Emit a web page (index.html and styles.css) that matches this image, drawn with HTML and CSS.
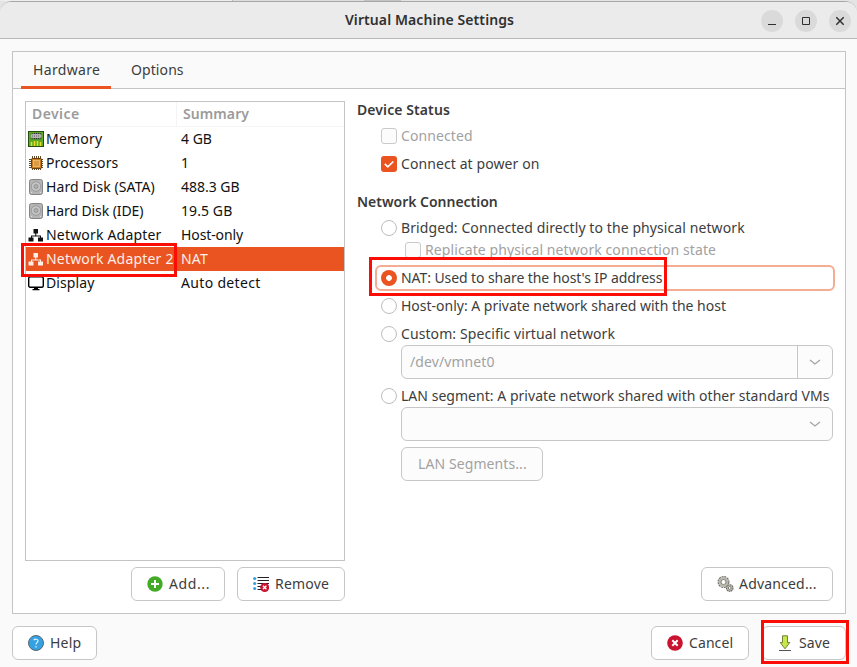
FILE: index.html
```
<!DOCTYPE html>
<html lang="en">
<head>
<meta charset="utf-8">
<title>Virtual Machine Settings</title>
<link rel="stylesheet" href="styles.css">
</head>
<body>
<svg class="defs" width="0" height="0">
  <defs>
    <symbol id="memory" viewBox="0 0 16 16"><rect x=".5" y=".5" width="15" height="15" fill="#5ea82a" stroke="#23500c"/><path d="M2 2h12v7H2z" fill="#4f9424"/><path d="M4.500 2.500v5M6.500 2v6M8.500 2v6M10.500 2v6M12.500 2.500v5" stroke="#333"/><rect x="2.500" y="3" width="11" height="4" rx="2" fill="#b5b5b5"/><path d="M4 5h8" stroke="#666" stroke-dasharray="1 1"/><path d="M3.500 15v-4M6.500 15v-5M9.500 15v-5M12.500 15v-4" stroke="#e6e022" stroke-width="1.500"/></symbol>
    <symbol id="cpu" viewBox="0 0 16 16"><path d="M4.500 1v14M6.500 1v14M8.500 1v14M10.500 1v14M12.500 1v14M1 4.500h14M1 6.500h14M1 8.500h14M1 10.500h14M1 12.500h14" stroke="#4e3515" stroke-width=".9"/><rect x="3.500" y="3.500" width="10" height="10" rx="1" fill="#c57c1d" stroke="#68400f"/><rect x="5.500" y="5.500" width="6" height="6" fill="#dc9a42" stroke="#eec27d" stroke-width=".8"/></symbol>
    <symbol id="disk" viewBox="0 0 16 16"><rect x="1.500" y=".5" width="13" height="15" rx="2" fill="#b5b5b5" stroke="#858585"/><circle cx="8" cy="7.500" r="4.800" fill="#c4c4c4" stroke="#959595" stroke-width=".9"/><circle cx="8" cy="7.500" r="2" fill="#b3b3b3" stroke="#888" stroke-width=".8"/><path d="M3 13.500h1M12 13.500h1" stroke="#ddd"/></symbol>
    <symbol id="network" viewBox="0 0 16 16"><path fill="currentColor" d="M5.500 2h4.500v4.500H8.300V8.500H13V10.500h2V14.500h-5V10.500h2V9.500H4v1h1.500v4H.5v-4H3V8.500h4.200V6.500H5.500z"/></symbol>
    <symbol id="display" viewBox="0 0 16 16"><rect x=".7" y="1.700" width="14.600" height="10.600" rx="1.500" fill="#fff" stroke="#000" stroke-width="1.400"/><path d="M6 12.500h4V14h1.500v1.200h-7V14H6z"/></symbol>
    <symbol id="chevron" viewBox="0 0 16 16"><path d="m3 6 5 4 5-4" fill="none" stroke="#a4a4a4" stroke-width="1.300"/></symbol>
    <symbol id="add" viewBox="0 0 16 16"><circle cx="8" cy="8" r="7.700" fill="#43aa27"/><path d="M8 4v8M4 8h8" stroke="#fff" stroke-width="2"/></symbol>
    <symbol id="remove" viewBox="0 0 16 16"><path d="M4.500 1.500H16M4.500 4.500H16M4.500 7.500H16M4.500 10.500H9M4.500 13.500H9" stroke="#222"/><g fill="#35a1df"><circle cx="1.700" cy="2.500" r="1.600"/><circle cx="1.700" cy="7.500" r="1.600"/><circle cx="1.700" cy="12.500" r="1.600"/></g><circle cx="11.700" cy="11.500" r="4.500" fill="#c9132f"/><path d="m10 9.800 3.400 3.400M13.400 9.800 10 13.200" stroke="#fff" stroke-width="1.300"/></symbol>
    <symbol id="gears" viewBox="0 0 17 16"><circle cx="6.500" cy="6" r="5.300" fill="none" stroke="#66665f" stroke-width="1.300" stroke-dasharray="2 .8"/><circle cx="6.500" cy="6" r="3.800" fill="none" stroke="#b9b9ad" stroke-width="2.400"/><circle cx="6.500" cy="6" r="2.500" fill="#fff" stroke="#66665f" stroke-width=".8"/><circle cx="12.700" cy="12" r="3.300" fill="#c0c0b4" stroke="#66665f" stroke-width="1.100" stroke-dasharray="1.700 .5"/><circle cx="12.700" cy="12" r="1.400" fill="#fff" stroke="#66665f" stroke-width=".8"/></symbol>
    <symbol id="help" viewBox="0 0 16 16"><circle cx="8" cy="8" r="7.500" fill="#34a1e3" stroke="#5c6870"/><path d="M5.800 5.200C6.200 4 9.900 3.600 10 5.800 10 7.400 8 7.500 8 9.600M8 11v1.400" fill="none" stroke="#e3f4ff" stroke-width="1.200"/></symbol>
    <symbol id="cancel" viewBox="0 0 16 16"><circle cx="8" cy="8" r="7.800" fill="#c9132f"/><path d="m5.300 5.300 5.400 5.400M10.700 5.300l-5.400 5.400" stroke="#fff" stroke-width="2"/></symbol>
    <symbol id="save" viewBox="0 0 16 16"><path d="M5.500.8h5v6.700h2.300L8 13.800 3.200 7.500h2.300z" fill="#c6e84b" stroke="#67762e" stroke-width=".9"/><path d="M2 15.500h12" stroke="#555"/></symbol>
    <symbol id="tick" viewBox="0 0 16 16"><path d="m3.800 7.800 3 3 5.500-5.300" fill="none" stroke="#fff" stroke-width="1.700"/></symbol>
  </defs>
</svg>

<div class="backdrop"></div>
<main class="window">
  <header class="titlebar">
    <h1>Virtual Machine Settings</h1>
    <div class="controls">
      <span class="control"><svg viewBox="0 0 22 22"><path d="M7 14.500h8"/></svg></span>
      <span class="control"><svg viewBox="0 0 22 22"><path d="M7.500 7.500h7v7h-7z"/></svg></span>
      <span class="control"><svg viewBox="0 0 22 22"><path d="m7.300 7.300 7.400 7.400M14.700 7.300l-7.400 7.400" stroke-width="1.500"/></svg></span>
    </div>
  </header>

  <section class="notebook">
    <nav class="tabs">
      <span class="tab tab-active sp-3">Hardware</span>
      <span class="tab">Options</span>
    </nav>
    <div class="page">
      <div class="left">
        <div class="list">
          <div class="row head"><span class="name sp-4">Device</span><span class="summary">Summary</span></div>
          <div class="row"><span class="name sp-2"><svg class="icon"><use href="#memory"/></svg>Memory</span><span class="summary sp-0">4 GB</span></div>
          <div class="row"><span class="name"><svg class="icon"><use href="#cpu"/></svg>Processors</span><span class="summary">1</span></div>
          <div class="row"><span class="name"><svg class="icon"><use href="#disk"/></svg>Hard Disk (SATA)</span><span class="summary sp-0">488.3 GB</span></div>
          <div class="row"><span class="name tight"><svg class="icon"><use href="#disk"/></svg>Hard Disk (IDE)</span><span class="summary">19.5 GB</span></div>
          <div class="row"><span class="name sp-2"><svg class="icon"><use href="#network"/></svg>Network Adapter</span><span class="summary tight">Host-only</span></div>
          <div class="row selected"><span class="name sp-2"><svg class="icon"><use href="#network"/></svg>Network Adapter 2</span><span class="summary sp-2">NAT</span></div>
          <div class="row"><span class="name"><svg class="icon"><use href="#display"/></svg>Display</span><span class="summary sp-3">Auto detect</span></div>
        </div>
        <div class="actions">
          <button class="btn add sp-6"><svg class="icon"><use href="#add"/></svg>Add...</button>
          <button class="btn remove sp-2"><svg class="icon"><use href="#remove"/></svg>Remove</button>
        </div>
      </div>

      <div class="right">
        <h2>Device Status</h2>
        <div class="opt connected disabled"><i class="box"></i>Connected</div>
        <div class="opt power"><i class="box checked"><svg><use href="#tick"/></svg></i>Connect at power on</div>
        <h2 class="net-title">Network Connection</h2>
        <div class="opt bridged"><i class="box radio"></i>Bridged: Connected directly to the physical network</div>
        <div class="opt replicate disabled"><i class="box"></i>Replicate physical network connection state</div>
        <div class="opt nat"><i class="box radio radio-on"></i>NAT: Used to share the host's IP address</div>
        <div class="opt host sp-0"><i class="box radio"></i>Host-only: A private network shared with the host</div>
        <div class="opt custom"><i class="box radio"></i>Custom: Specific virtual network</div>
        <div class="combo"><span class="entry">/dev/vmnet0</span><span class="arrow divided"><svg class="icon"><use href="#chevron"/></svg></span></div>
        <div class="opt lan sp-05"><i class="box radio"></i>LAN segment: A private network shared with other standard VMs</div>
        <div class="combo"><span class="entry"></span><span class="arrow"><svg class="icon"><use href="#chevron"/></svg></span></div>
        <button class="btn segments" disabled>LAN Segments...</button>
        <button class="btn advanced sp-2"><svg class="icon gears"><use href="#gears"/></svg>Advanced...</button>
      </div>
    </div>
  </section>

  <footer class="footer">
    <button class="btn help sp-2"><svg class="icon"><use href="#help"/></svg>Help</button>
    <button class="btn cancel"><svg class="icon"><use href="#cancel"/></svg>Cancel</button>
    <button class="btn save"><svg class="icon"><use href="#save"/></svg>Save</button>
  </footer>
</main>

<div class="mark mark-device"></div>
<div class="mark mark-nat"></div>
<div class="mark mark-save"></div>
</body>
</html>
```
FILE: styles.css
```
* { box-sizing: border-box; }
body {
  margin: 0;
  width: 857px;
  height: 667px;
  overflow: hidden;
  position: relative;
  background: #e4e4e4;
  color: #3d3d3d;
  font: 14px/18px "Noto Sans", sans-serif;
  letter-spacing: .09px;
  white-space: nowrap;
}
.defs { position: absolute; }
h1, h2 { margin: 0; font-size: 14px; font-weight: 600; color: #3a3a3a; }
h1 { line-height: 36px; color: #303030; }

.backdrop { height: 1px; background: linear-gradient(90deg, #eee 232px, #bbb 232px 233px, #ddd 233px 364px, #c4c4c4 364px 401px, #e4e4e4 401px); }
.window {
  height: 666px;
  background: #fafafa;
  border-top: 1px solid #a5a8a5;
  border-radius: 12px 12px 0 0;
}
.titlebar {
  height: 37px;
  display: grid;
  grid-template-columns: 1fr auto 1fr;
  align-items: center;
  padding: 0 6px 0 8px;
  background: #ebebeb;
  border-bottom: 1px solid #b9b9b9;
  border-radius: 11px 11px 0 0;
}
.titlebar h1 { grid-column: 2; }
.controls { display: flex; justify-content: flex-end; gap: 12px; padding-top: 1px; }
.control { width: 22px; height: 22px; border-radius: 50%; background: #dadada; }
.control svg { display: block; width: 22px; height: 22px; fill: none; stroke: #303030; }

.notebook { height: 563px; margin: 12px 11px 0 12px; border: 1px solid #c4c4c4; background: #fff; }
.tabs { height: 37px; display: flex; padding-left: 8px; background: #fafafa; border-bottom: 1px solid #c4c4c4; }
.tab { height: 37px; padding: 0 10px; line-height: 36px; }
.tab-active { width: 90px; padding: 0 12px; margin-right: 10px; border-bottom: 3px solid #e95420; }
.page { display: flex; gap: 12px; padding: 12px 12px 0; }

.list { width: 320px; height: 460px; border: 1px solid #c4c4c4; color: #111; }
.row { display: flex; align-items: center; height: 24px; padding-left: 2px; }
.name { display: flex; align-items: center; gap: 2px; width: 153px; }
.head { height: 25px; padding-left: 0; font-weight: 600; color: #9b9b9b; border-bottom: 1px solid #f6f6f6; }
.head .name { width: 151px; height: 24px; padding-left: 6px; border-right: 1px solid #f4f4f4; }
.head .summary { padding-left: 6px; }
.selected { background: #e95420; color: #fdeee8; }
.icon { width: 16px; height: 16px; flex: none; }

.actions { display: flex; justify-content: flex-end; gap: 12px; margin-top: 6px; }
.btn {
  display: flex;
  align-items: center;
  gap: 6px;
  height: 34px;
  padding: 0 0 0 15px;
  border: 1px solid #c6c6c6;
  border-radius: 6px;
  background: #fff;
  color: #3d3d3d;
  font: 14px/18px "Noto Sans", sans-serif;
  letter-spacing: .09px;
}
.add { width: 94px; }
.remove { width: 108px; }
.segments { width: 142px; margin: 6px 0 0 44px; padding-left: 16px; }
.btn:disabled { background: #fcfcfc; color: #a2a2a2; }

.right { flex: 1; height: 500px; display: flex; flex-direction: column; }
.opt { display: flex; align-items: center; gap: 4px; height: 22px; margin-left: 24px; }
.disabled { color: #a2a2a2; }
.box { width: 16px; height: 16px; flex: none; border: 1px solid #bdbdbd; border-radius: 3px; background: #fff; }
.disabled .box { background: #fcfcfc; border-color: #cacaca; }
.checked { border: 0; background: #e95420; }
.checked svg { display: block; width: 16px; height: 16px; }
.radio { border-radius: 50%; }
.radio-on { border: 5.5px solid #e95420; background: radial-gradient(circle, #fff 2.5px, #e95420 3.2px) border-box; border-color: transparent; }
.connected { margin-top: 6px; }
.power { margin-top: 6px; }
.net-title { margin-top: 18px; letter-spacing: -.02px; }
.bridged { margin-top: 6px; }
.replicate { margin-left: 48px; }
.nat { height: 26px; margin: 4px -2px 0 18px; padding-left: 4px; border: 2px solid #f4ac92; border-radius: 6px; letter-spacing: -.08px; }
.host { margin-top: 4px; }
.custom, .lan { margin-top: 6px; }
.combo { display: flex; height: 34px; margin-left: 44px; border: 1px solid #c6c6c6; border-radius: 6px; background: #fcfcfc; color: #a2a2a2; }
.entry { flex: 1; padding-left: 8px; line-height: 32px; }
.arrow { width: 35px; display: grid; place-items: center; }
.divided { border-left: 1px solid #c6c6c6; }
.advanced { width: 132px; margin: auto 0 0 auto; gap: 5px; }
.gears { width: 17px; }

.footer { display: flex; padding: 12px 11px 0 12px; }
.help { width: 85px; }
.cancel { width: 98px; margin-left: auto; }
.save { width: 84px; margin-left: 13px; padding-left: 14px; }

.btn.sp-2, .sp-2 { letter-spacing: .19px; }
.sp-3 { letter-spacing: .33px; }
.sp-4 { letter-spacing: .42px; }
.btn.sp-6 { letter-spacing: .6px; }
.sp-0 { letter-spacing: -.01px; }
.sp-05 { letter-spacing: .03px; }
.tight { letter-spacing: -.1px; }

.mark { position: absolute; border: 3px solid #fb0d06; }
.mark-device { left: 21px; top: 243px; width: 156px; height: 34px; }
.mark-nat { left: 369px; top: 257px; width: 298px; height: 39px; }
.mark-save { left: 761px; top: 620px; width: 88px; height: 44px; }
```
